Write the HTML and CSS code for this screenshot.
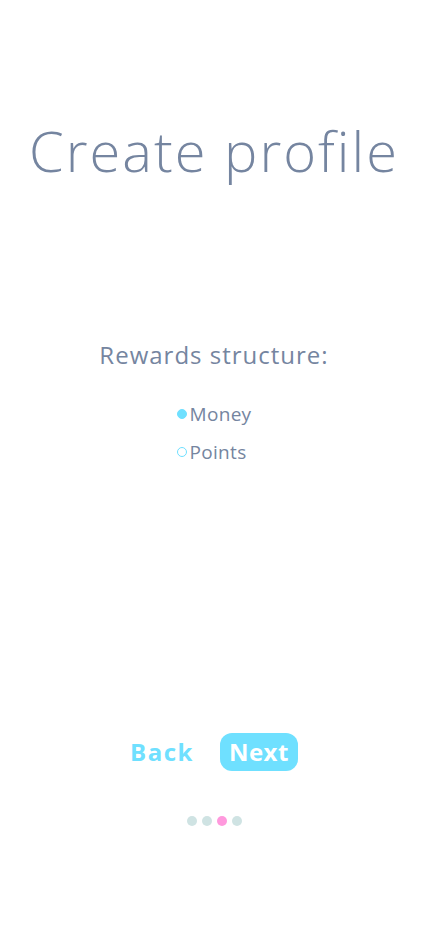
FILE: index.html
```html
<!DOCTYPE html>
<html>
<head>
<meta charset="utf-8">
<link rel="stylesheet" href="styles.css">
</head>
<body>
<main class="screen">
  <h1 class="title">Create profile</h1>
  <section class="question">
    <p class="label">Rewards structure:</p>
    <ul class="options">
      <li class="option"><span class="radio radio-on"></span>Money</li>
      <li class="option"><span class="radio"></span>Points</li>
    </ul>
  </section>
  <nav class="actions">
    <button class="btn btn-back">Back</button>
    <button class="btn btn-next">Next</button>
  </nav>
  <div class="dots">
    <span class="dot"></span><span class="dot"></span><span class="dot dot-active"></span><span class="dot"></span>
  </div>
</main>
</body>
</html>
```
FILE: styles.css
```css
html, body {
  margin: 0;
  padding: 0;
  background: #ffffff;
}
.screen {
  width: 428px;
  height: 926px;
  display: flex;
  flex-direction: column;
  align-items: center;
  font-family: "Open Sans", "Noto Sans", sans-serif;
  color: #7585a0;
}
.title {
  margin: 113px 0 0;
  font-size: 56px;
  font-weight: 300;
  line-height: 74px;
  letter-spacing: 2px;
}
.question {
  margin-top: 153px;
  display: flex;
  flex-direction: column;
  align-items: center;
}
.label {
  margin: 0;
  font-size: 24px;
  line-height: 30px;
  font-weight: 400;
  letter-spacing: 1px;
}
.options {
  list-style: none;
  margin: 31px 0 0;
  padding: 0;
  display: flex;
  flex-direction: column;
  gap: 12px;
}
.option {
  display: flex;
  align-items: center;
  font-size: 19px;
  line-height: 26px;
  letter-spacing: 0.3px;
}
.radio {
  width: 10px;
  height: 10px;
  box-sizing: border-box;
  border-radius: 50%;
  border: 1.5px solid #6fe0ff;
  margin-right: 3px;
}
.radio-on {
  background: #6fe0ff;
}
.actions {
  margin-top: 268px;
  display: flex;
  gap: 26px;
  align-items: center;
}
.btn {
  font-family: "Open Sans", "Noto Sans", sans-serif;
  font-weight: 700;
  font-size: 24px;
  line-height: 38px;
  border: none;
  background: none;
  color: #6fe0ff;
  padding: 0 9px;
  border-radius: 12px;
  cursor: pointer;
  letter-spacing: 0.5px;
}
.btn-back {
  padding: 0;
  letter-spacing: 1.5px;
}
.btn-next {
  background: #6fe0ff;
  color: #ffffff;
}
.dots {
  margin-top: 45px;
  display: flex;
  gap: 5px;
}
.dot {
  width: 10px;
  height: 10px;
  border-radius: 50%;
  background: #cfe3e3;
}
.dot-active {
  background: #ff99dd;
}
```
